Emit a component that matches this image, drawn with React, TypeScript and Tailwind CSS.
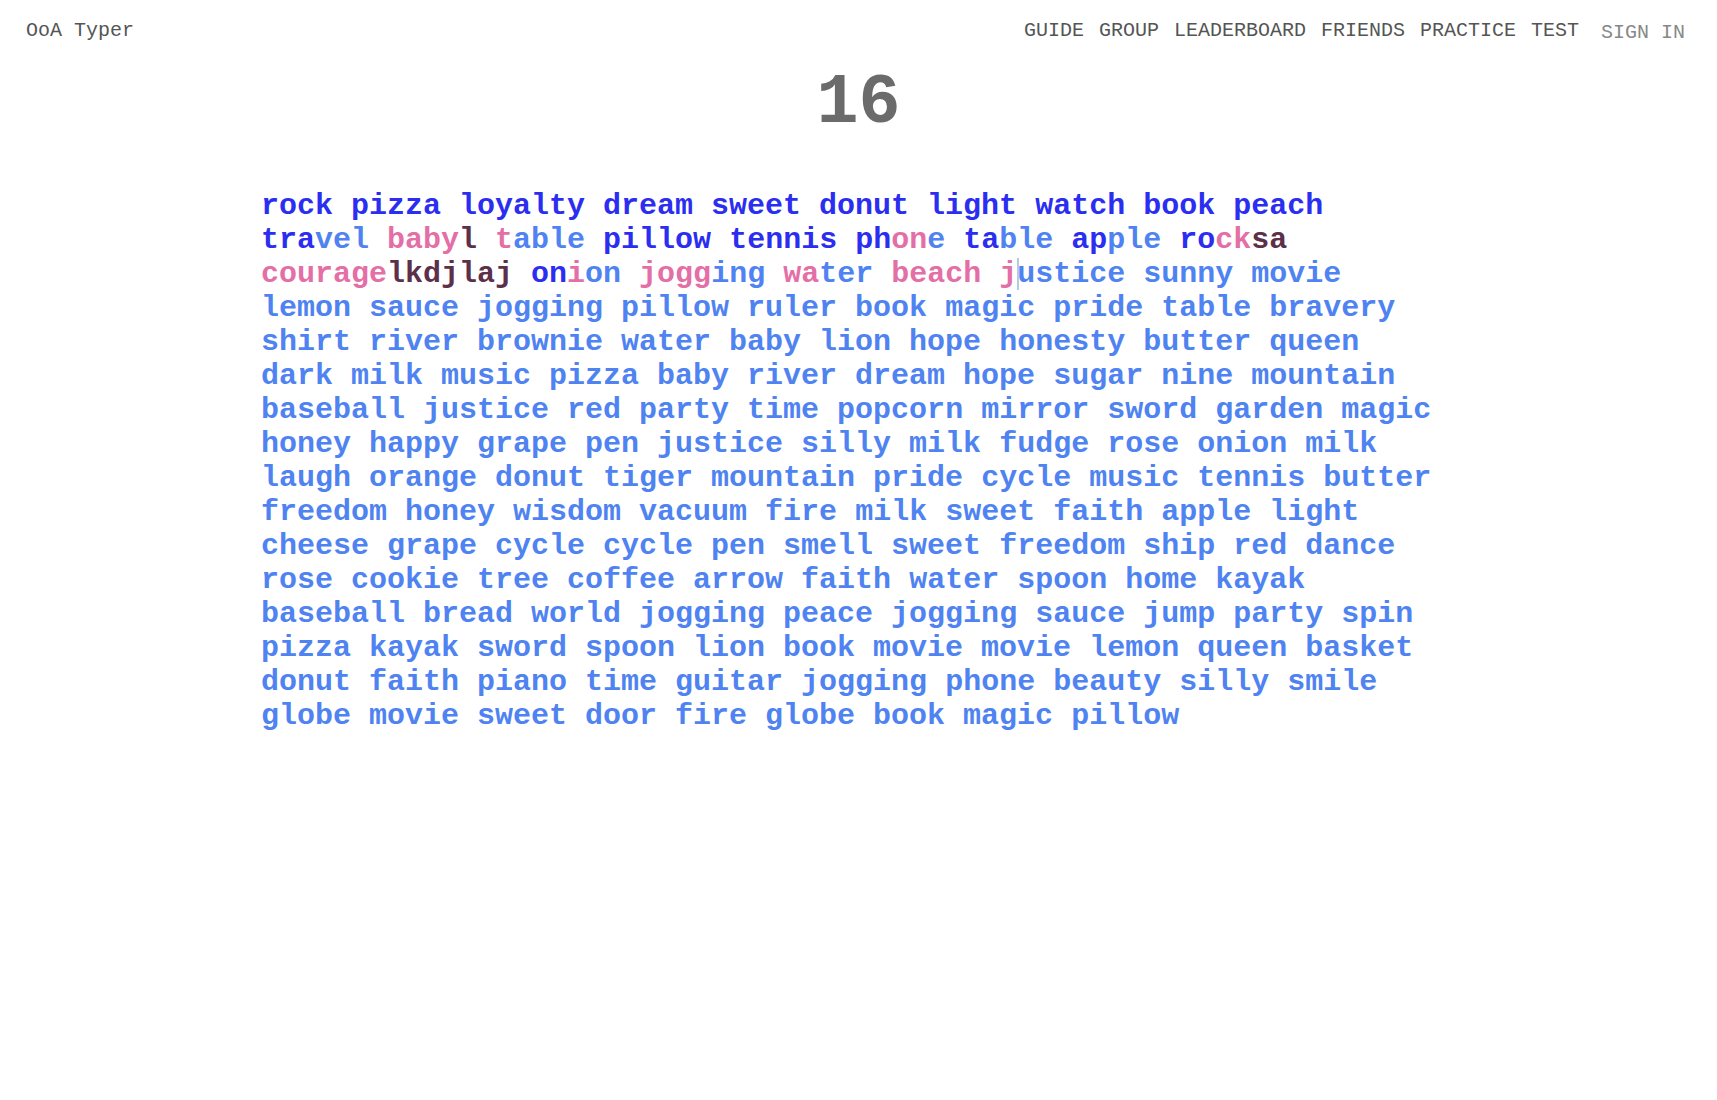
import React from "react";

type State = "c" | "u" | "i" | "x";
type Seg = [string, State];

const colors: Record<State, string> = {
  c: "text-[#2b2ef0]",
  u: "text-[#4f83f1]",
  i: "text-[#e46fa6]",
  x: "text-[#5c2f4a]",
};

// words already typed, split into letter runs by result
const typed: Seg[][] = [
  [["rock", "c"]],
  [["pizza", "c"]],
  [["loyalty", "c"]],
  [["dream", "c"]],
  [["sweet", "c"]],
  [["donut", "c"]],
  [["light", "c"]],
  [["watch", "c"]],
  [["book", "c"]],
  [["peach", "c"]],
  [["tra", "c"], ["vel", "u"]],
  [["baby", "i"], ["l", "x"]],
  [["t", "i"], ["able", "u"]],
  [["pillow", "c"]],
  [["tennis", "c"]],
  [["ph", "c"], ["on", "i"], ["e", "u"]],
  [["ta", "c"], ["ble", "u"]],
  [["ap", "c"], ["ple", "u"]],
  [["ro", "c"], ["ck", "i"], ["sa", "x"]],
  [["courage", "i"], ["lkdjlaj", "x"]],
  [["on", "c"], ["i", "i"], ["on", "u"]],
  [["jogg", "i"], ["ing", "u"]],
  [["wa", "i"], ["ter", "u"]],
  [["beach", "i"]],
];

const rest =
  "sunny movie lemon sauce jogging pillow ruler book magic pride table bravery shirt river brownie water baby lion hope honesty butter queen dark milk music pizza baby river dream hope sugar nine mountain baseball justice red party time popcorn mirror sword garden magic honey happy grape pen justice silly milk fudge rose onion milk laugh orange donut tiger mountain pride cycle music tennis butter freedom honey wisdom vacuum fire milk sweet faith apple light cheese grape cycle cycle pen smell sweet freedom ship red dance rose cookie tree coffee arrow faith water spoon home kayak baseball bread world jogging peace jogging sauce jump party spin pizza kayak sword spoon lion book movie movie lemon queen basket donut faith piano time guitar jogging phone beauty silly smile globe movie sweet door fire globe book magic pillow".split(
    " "
  );

const navLinks = ["GUIDE", "GROUP", "LEADERBOARD", "FRIENDS", "PRACTICE", "TEST"];

function Word({ segs }: { segs: Seg[] }) {
  return (
    <span className="inline-block mr-[18px]">
      {segs.map(([t, s], i) => (
        <span key={i} className={colors[s]}>
          {t}
        </span>
      ))}
    </span>
  );
}

export default function App() {
  return (
    <div className="min-h-[1100px] bg-white font-['Liberation_Mono',monospace]">
      <header className="flex items-start justify-between pt-[21px] pl-[26px] pr-8 text-[20px] leading-5 text-[#555]">
        <div>OoA Typer</div>
        <nav className="flex items-start">
          <div className="flex gap-[15px]">
            {navLinks.map((l) => (
              <span key={l}>{l}</span>
            ))}
          </div>
          <span className="ml-[22px] mt-[2px] text-[#888]">SIGN IN</span>
        </nav>
      </header>

      <div className="mt-[26px] text-center text-[70px] font-bold leading-[70px] text-[#6b6b6b]">
        16
      </div>

      <div className="flex justify-center mt-[50px]">
        <div className="w-[1195px] text-[30px] font-bold leading-[34px]">
          {typed.map((w, i) => (
            <Word key={i} segs={w} />
          ))}
          <span className="inline-block mr-[18px]">
            <span className={colors.i}>j</span>
            <span className="relative text-[#4f83f1]">
              <span className="absolute left-0 top-[1px] h-[32px] w-[2px] bg-[#b4cbe2]" />
              ustice
            </span>
          </span>
          {rest.map((w, i) => (
            <Word key={"r" + i} segs={[[w, "u"]]} />
          ))}
        </div>
      </div>
    </div>
  );
}
